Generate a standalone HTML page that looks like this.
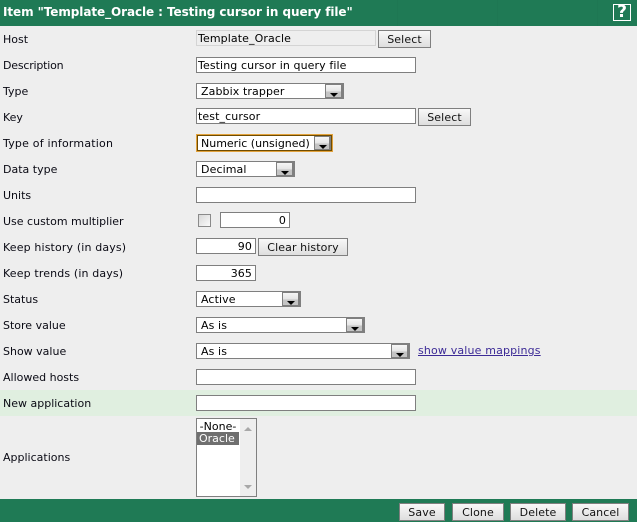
<!DOCTYPE html>
<html><head><meta charset="utf-8"><style>
html,body{margin:0;padding:0}
body{width:637px;height:522px;background:#eeeeee;position:relative;overflow:hidden;font:11px "DejaVu Sans","Liberation Sans",sans-serif;color:#000}
div,a{position:absolute;box-sizing:border-box;white-space:nowrap}
.l{left:3px;height:16px;line-height:16px;color:#0a0a14}
.i{background:#fff;border:1px solid #7f7f7f;height:16px;line-height:15px;padding-left:1px;letter-spacing:.1px}
.r{text-align:right;padding:0 3px 0 0}
.s{background:#fff;border:1px solid #7f7f7f;height:16px;line-height:15px;padding-left:4px;letter-spacing:.1px}
.a{top:0;right:0;bottom:0;width:18px;background:#7f7f7f;position:absolute}
.a:before{content:"";position:absolute;left:1px;top:1px;right:2px;bottom:1px;background:linear-gradient(#f6f6f6 0,#e4e4e4 55%,#c4c4c4 56%,#c4c4c4 100%)}
.a:after{content:"";position:absolute;left:5px;top:9px;border-left:4px solid transparent;border-right:4px solid transparent;border-top:4px solid #000}
.b{height:18px;line-height:17px;text-align:center;border:1px solid #7f7f7f;background:linear-gradient(#f8f8f8,#dedede);color:#111;letter-spacing:.1px}
</style></head><body>
<div style="left:0;top:0;width:637px;height:26px;background:#1f7a55"></div>
<div style="left:397px;top:0;width:1px;height:26px;background:#1e7753"></div>
<div style="left:497px;top:0;width:1px;height:26px;background:#1e7753"></div>
<div style="left:597px;top:0;width:1px;height:26px;background:#1e7753"></div>
<div style="left:3px;top:4px;height:17px;line-height:17px;color:#fff;font-weight:bold;font-size:12px;letter-spacing:-.08px">Item "Template_Oracle : Testing cursor in query file"</div>
<div style="left:613px;top:4px;width:18px;height:17px;border:1px solid #fff;color:#fff;font:bold 17px/15px 'DejaVu Sans',sans-serif;text-align:center;overflow:hidden">?</div>

<div style="left:0;top:390px;width:637px;height:26px;background:#e0efe0"></div>
<div style="left:0;top:499px;width:637px;height:23px;background:#1f7a55"></div>

<div class="l" style="top:32px">Host</div>
<div class="l" style="top:58px;letter-spacing:-.2px">Description</div>
<div class="l" style="top:84px">Type</div>
<div class="l" style="top:110px">Key</div>
<div class="l" style="top:136px;letter-spacing:.2px">Type of information</div>
<div class="l" style="top:162px">Data type</div>
<div class="l" style="top:188px">Units</div>
<div class="l" style="top:214px">Use custom multiplier</div>
<div class="l" style="top:240px;letter-spacing:.14px">Keep history (in days)</div>
<div class="l" style="top:266px;letter-spacing:.14px">Keep trends (in days)</div>
<div class="l" style="top:292px">Status</div>
<div class="l" style="top:318px">Store value</div>
<div class="l" style="top:344px">Show value</div>
<div class="l" style="top:370px">Allowed hosts</div>
<div class="l" style="top:396px">New application</div>
<div class="l" style="top:450px">Applications</div>

<div class="i" style="left:196px;top:30px;width:180px;background:#eeeeee;border-color:#d4d4d4">Template_Oracle</div>
<div class="b" style="left:378px;top:30px;width:53px">Select</div>
<div class="i" style="left:196px;top:57px;width:220px">Testing cursor in query file</div>
<div class="s" style="left:196px;top:83px;width:148px">Zabbix trapper<div class="a"></div></div>
<div class="i" style="left:196px;top:108px;width:220px">test_cursor</div>
<div class="b" style="left:418px;top:108px;width:53px">Select</div>
<div class="s" style="left:196px;top:134px;width:137px;height:18px;border-color:#e2a23c;box-shadow:inset 0 0 0 1px #6f4c00;line-height:17px;letter-spacing:0">Numeric (unsigned)<div class="a" style="top:1px;right:1px;bottom:1px;width:17px"></div></div>
<div class="s" style="left:196px;top:161px;width:99px">Decimal<div class="a"></div></div>
<div class="i" style="left:196px;top:187px;width:220px"></div>
<div style="left:198px;top:214px;width:13px;height:13px;border:1px solid #8a8a8a;background:linear-gradient(135deg,#d8d8d8,#fafafa)"></div>
<div class="i r" style="left:220px;top:212px;width:70px">0</div>
<div class="i r" style="left:196px;top:238px;width:60px">90</div>
<div class="b" style="left:258px;top:238px;width:90px">Clear history</div>
<div class="i r" style="left:196px;top:265px;width:60px">365</div>
<div class="s" style="left:196px;top:291px;width:105px">Active<div class="a"></div></div>
<div class="s" style="left:196px;top:317px;width:169px">As is<div class="a"></div></div>
<div class="s" style="left:196px;top:343px;width:214px">As is<div class="a"></div></div>
<a href="#" style="left:418px;top:343px;line-height:16px;color:#3c2a96;text-decoration:underline;letter-spacing:.16px">show value mappings</a>
<div class="i" style="left:196px;top:369px;width:220px"></div>
<div class="i" style="left:196px;top:395px;width:220px"></div>

<div style="left:196px;top:418px;width:61px;height:79px;border:1px solid #7f7f7f;background:#fff">
<div style="left:0;top:1px;width:42px;height:13px;line-height:13px;text-align:center">-None-</div>
<div style="left:0;top:13px;width:42px;height:13px;line-height:13px;background:#6f6f6f;color:#fff;padding-left:2px">Oracle</div>
<div style="right:0;top:0;width:16px;height:77px;background:#eeeeee"></div>
<div style="left:47px;top:8px;border-left:4px solid transparent;border-right:4px solid transparent;border-bottom:4px solid #a8a8a8"></div>
<div style="left:47px;top:66px;border-left:4px solid transparent;border-right:4px solid transparent;border-top:4px solid #a8a8a8"></div>
</div>

<div class="b" style="left:399px;top:503px;width:46px">Save</div>
<div class="b" style="left:452px;top:503px;width:52px">Clone</div>
<div class="b" style="left:510px;top:503px;width:56px">Delete</div>
<div class="b" style="left:572px;top:503px;width:57px">Cancel</div>
</body></html>
